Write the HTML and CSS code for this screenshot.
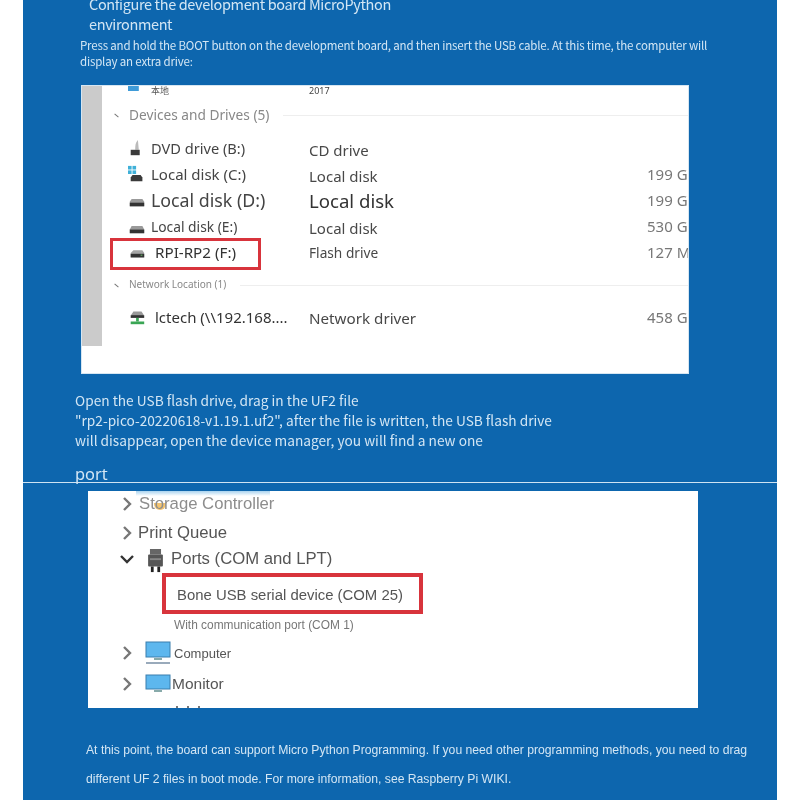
FILE: index.html
```html
<!DOCTYPE html>
<html lang="en">
<head>
<meta charset="utf-8">
<title>Configure MicroPython</title>
<link rel="stylesheet" href="styles.css">
</head>
<body>
<main class="panel">
  <section class="top">
    <h1 class="title">Configure the development board MicroPython<br>environment</h1>
    <p class="intro">Press and hold the BOOT button on the development board, and then insert the USB cable. At this time, the computer will display an extra drive:</p>
    <div class="explorer">
      <div class="scrollbar"></div>
      <div class="files">
        <div class="row row-clip">
          <svg class="ico" viewBox="0 0 20 12"><rect x="0" y="0" width="12" height="6" fill="#3f9bd8"/></svg>
          <span class="name-clip">本地</span><span class="type-clip">2017</span><span class="size"></span>
        </div>
        <div class="group g1"><i class="tick"></i><span class="group-label">Devices and Drives (5)</span><span class="rule"></span></div>
        <div class="row r1">
          <svg class="ico" viewBox="0 0 20 20"><path d="M11 1c-3 3-3 7-3 11h4z" fill="#bbb"/><rect x="3" y="12" width="10" height="6" fill="#3a3a3a"/></svg>
          <span class="name n-b">DVD drive (B:)</span><span class="type">CD drive</span><span class="size"></span>
        </div>
        <div class="row r1">
          <svg class="ico" viewBox="0 0 20 20"><rect x="0" y="1" width="4" height="4" fill="#3fb0d8"/><rect x="5" y="1" width="4" height="4" fill="#3fb0d8"/><rect x="0" y="6" width="4" height="4" fill="#3fb0d8"/><rect x="5" y="6" width="4" height="4" fill="#3fb0d8"/><path d="M5 11h9l2 3v4H3v-4z" fill="#3a3a3a"/></svg>
          <span class="name n-c">Local disk (C:)</span><span class="type">Local disk</span><span class="size">199 G</span>
        </div>
        <div class="row r1">
          <svg class="ico" viewBox="0 0 20 20"><path d="M4 9h12l2 3v5H2v-5z" fill="#9a9a9a"/><rect x="2" y="13" width="16" height="4" fill="#333"/></svg>
          <span class="name n-d">Local disk (D:)</span><span class="type t-d">Local disk</span><span class="size">199 G</span>
        </div>
        <div class="row r1">
          <svg class="ico" viewBox="0 0 20 20"><path d="M4 10h12l2 4v4H2v-4z" fill="#9a9a9a"/><rect x="2" y="14" width="16" height="4" fill="#333"/></svg>
          <span class="name n-e">Local disk (E:)</span><span class="type">Local disk</span><span class="size">530 G</span>
        </div>
        <div class="row r1">
          <svg class="ico" viewBox="0 0 20 20"><path d="M6 8h10l2 3v5H3v-5z" fill="#a5a5a5"/><rect x="3" y="12" width="15" height="4" fill="#333"/><rect x="14" y="13" width="2" height="1" fill="#6fd06f"/></svg>
          <span class="name n-f">RPI-RP2 (F:)</span><span class="type t-f">Flash drive</span><span class="size">127 M</span>
        </div>
        <div class="group g2"><i class="tick"></i><span class="group-label small">Network Location (1)</span><span class="rule"></span></div>
        <div class="row r2">
          <svg class="ico" viewBox="0 0 20 20"><path d="M6 4h9l2 3v3H4V7z" fill="#999"/><rect x="3" y="8" width="15" height="3" fill="#333"/><rect x="9" y="11" width="3" height="4" fill="#3aa655"/><rect x="3" y="15" width="15" height="3" fill="#3aa655"/></svg>
          <span class="name n-l">lctech (\\192.168....</span><span class="type t-n">Network driver</span><span class="size">458 G</span>
        </div>
      </div>
      <div class="redbox box-a"></div>
    </div>
    <p class="body-text">Open the USB flash drive, drag in the UF2 file<br>"rp2-pico-20220618-v1.19.1.uf2", after the file is written, the USB flash drive<br>will disappear, open the device manager, you will find a new one</p>
    <p class="port">port</p>
  </section>
  <section class="bottom">
    <div class="devices">
      <div class="smear"></div>
      <div class="tree t1"><svg class="chev" viewBox="0 0 10 14"><path d="M2 1l6 6-6 6" /></svg><span class="muted">Storage Controller</span></div>
      <div class="tree t2"><svg class="chev" viewBox="0 0 10 14"><path d="M2 1l6 6-6 6" /></svg><span>Print Queue</span></div>
      <div class="tree t3"><svg class="chev-down" viewBox="0 0 14 10"><path d="M1 2l6 6 6-6" /></svg>
        <svg class="port-ico" viewBox="0 0 18 26"><rect x="3" y="0" width="12" height="6" fill="#666"/><rect x="1" y="6" width="16" height="13" rx="1" fill="#555"/><rect x="3" y="10" width="12" height="2" fill="#888"/><rect x="4" y="19" width="3" height="6" fill="#222"/><rect x="11" y="19" width="3" height="6" fill="#222"/></svg>
        <span>Ports (COM and LPT)</span></div>
      <div class="leaf-big">Bone USB serial device (COM 25)</div>
      <div class="leaf-small">With communication port (COM 1)</div>
      <div class="tree t4"><svg class="chev" viewBox="0 0 10 14"><path d="M2 1l6 6-6 6" /></svg>
        <svg class="mon" viewBox="0 0 26 24"><rect x="1" y="1" width="24" height="15" fill="#5db7ee" stroke="#3b7fae"/><rect x="9" y="17" width="8" height="2" fill="#8aa"/><rect x="1" y="21" width="24" height="2" fill="#9ab"/></svg>
        <span class="lbl-c">Computer</span></div>
      <div class="tree t5"><svg class="chev" viewBox="0 0 10 14"><path d="M2 1l6 6-6 6" /></svg>
        <svg class="mon" viewBox="0 0 26 20"><rect x="1" y="1" width="24" height="14" fill="#5db7ee" stroke="#3b7fae"/><rect x="9" y="16" width="8" height="2" fill="#8aa"/></svg>
        <span class="lbl-m">Monitor</span></div>
      <div class="redbox box-b"></div>
      <div class="blob"></div>
      <div class="cut"><i></i><i></i><i></i></div>
    </div>
    <p class="foot">At this point, the board can support Micro Python Programming. If you need other programming methods, you need to drag<br>different UF 2 files in boot mode. For more information, see Raspberry Pi WIKI.</p>
  </section>
</main>
</body>
</html>
```

FILE: styles.css
```css
* { box-sizing: border-box; }
html, body { margin: 0; padding: 0; background: #fff; }
body { width: 800px; height: 800px; overflow: hidden; font-family: "Noto Sans", sans-serif; }
p, h1 { margin: 0; font-weight: 400; }

.panel { width: 754px; height: 800px; margin: 0 23px; background: #0d66ae; color: #d3e6f4; overflow: hidden; filter: blur(0.35px); }

.top { display: flow-root; height: 482px; padding-left: 52px; }
.title { margin-left: 14px; margin-top: -6px; font-family: "Noto Sans CJK SC", "Noto Sans", sans-serif; font-size: 14.5px; line-height: 20px; letter-spacing: -0.37px; }
.intro { width: 640px; margin-left: 5px; margin-top: 3px; font-family: "Noto Sans CJK SC", "Noto Sans", sans-serif; font-size: 11.5px; line-height: 16px; letter-spacing: -0.17px; }

.explorer { position: relative; display: flex; width: 608px; height: 289px; margin: 16px 0 0 6px; background: #fff; border: 1px solid #d6e6f2; color: #555; overflow: hidden; }
.scrollbar { flex: none; width: 20px; height: 260px; background: #cbcbcb; }
.files { flex: 1; min-width: 0; padding-left: 26px; }
.row { display: grid; grid-template-columns: 23px 158px 338px 40px; align-items: center; }
.row-clip { height: 12px; margin-top: -1px; }
.r1 { height: 26px; }
.r2 { height: 26px; margin-top: 10px; }
.ico { width: 18px; height: 18px; }
.row-clip .ico { height: 12px; }
.name-clip { font-family: "Noto Sans CJK SC", sans-serif; font-size: 9px; line-height: 12px; color: #555; }
.type-clip { font-size: 9px; line-height: 12px; color: #444; }
.name { color: #444; white-space: nowrap; }
.type { padding-top: 4px; color: #484848; font-size: 15px; white-space: nowrap; }
.size { color: #777; font-size: 15px; white-space: nowrap; }
.n-b { font-size: 14.6px; }
.n-c { font-size: 15px; }
.n-d { font-size: 17.8px; }
.n-e { font-size: 13.8px; }
.n-f { font-size: 15.2px; padding-left: 4px; color: #333; }
.n-l { font-size: 15px; padding-left: 4px; color: #333; }
.t-d { padding-top: 0; font-size: 18.6px; color: #333; }
.t-f { padding-top: 0; font-size: 13.7px; }
.t-n { padding-top: 2px; font-size: 15.2px; }

.group { display: flex; align-items: center; height: 20px; color: #888; }
.g1 { margin-top: 7px; margin-bottom: 11px; }
.g2 { margin-top: 9px; }
.tick { display: block; width: 5px; height: 1px; margin: 2px 10px 0 -14px; background: #777; transform: rotate(40deg); }
.group-label { font-size: 13.7px; white-space: nowrap; }
.group-label.small { font-size: 10px; }
.rule { flex: 1; height: 1px; margin: 3px 0 0 14px; background: #eee; }

.redbox { position: absolute; border: 3px solid #d8343c; }
.box-a { left: 28px; top: 152px; width: 151px; height: 32px; }
.box-b { left: 74px; top: 82px; width: 261px; height: 41px; border-width: 4px; }

.body-text { width: 500px; margin: 16px 0 0 0; font-family: "Noto Sans CJK SC", "Noto Sans", sans-serif; font-size: 13.7px; line-height: 20px; }
.port { margin-top: 14px; font-size: 16.4px; line-height: 20px; }

.bottom { border-top: 1px solid #cfe3f2; }
.devices { position: relative; width: 610px; height: 217px; margin: 8px 0 0 65px; padding-top: 1px; background: #fff; color: #555; font-family: "Liberation Sans", sans-serif; overflow: hidden; }
.smear { position: absolute; left: 48px; top: 0; width: 134px; height: 5px; background: linear-gradient(#a9d3ef, #fff); }
.blob { position: absolute; left: 66px; top: 12px; width: 12px; height: 7px; border-radius: 0 0 6px 6px; background: #f0b040; opacity: .75; z-index: 0; }
.cut { position: absolute; left: 88px; bottom: 0; display: flex; gap: 9px; }
.cut i { display: block; width: 2px; height: 2px; background: #777; }
.tree { position: relative; z-index: 1; display: flex; align-items: center; height: 24px; padding-left: 34px; font-size: 16.7px; white-space: nowrap; }
.muted { color: #8d8d8d; }
.t1 { margin-top: 0; gap: 7px; }
.t2 { margin-top: 5px; gap: 6px; }
.t3 { margin-top: 2px; padding-left: 32px; gap: 7px; }
.t4 { margin-top: 9px; font-size: 14px; gap: 0; }
.t5 { margin-top: 7px; font-size: 14px; }
.chev, .chev-down { fill: none; stroke: #777; stroke-width: 2.4; flex: none; }
.chev { width: 10px; height: 14px; }
.chev-down { width: 14px; height: 10px; stroke: #333; }
.port-ico { width: 17px; height: 24px; flex: none; margin: 3px 0 0 6px; }
.mon { width: 26px; height: 24px; flex: none; margin-left: 13px; }
.lbl-c { margin-left: 3px; font-size: 13px; }
.lbl-m { margin-left: 1px; font-size: 15.5px; }
.leaf-big { margin: 14px 0 0 89px; font-size: 14.9px; line-height: 20px; white-space: nowrap; }
.leaf-small { margin: 13px 0 0 86px; font-size: 11.9px; line-height: 14px; color: #777; white-space: nowrap; }

.foot { margin: 28px 0 0 63px; font-family: "Liberation Sans", sans-serif; font-size: 12.18px; line-height: 29px; white-space: nowrap; }
```
